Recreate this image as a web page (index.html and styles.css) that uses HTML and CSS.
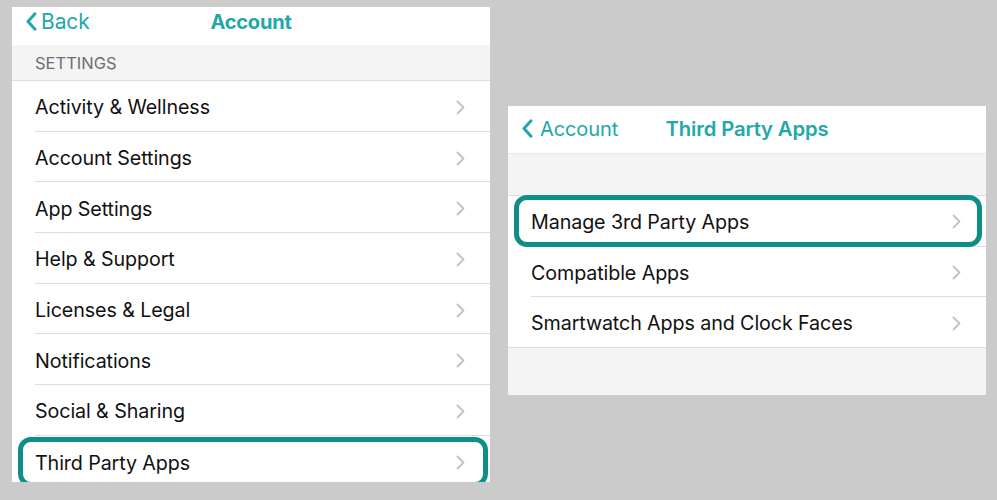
FILE: index.html
```html
<!DOCTYPE html>
<html>
<head>
<meta charset="utf-8">
<link rel="stylesheet" href="styles.css">
</head>
<body>
<div class="stage">
  <section class="panel panel-left">
    <header class="nav">
      <a class="back"><svg class="back-chev" viewBox="0 0 11 19"><path d="M9 1.8 L2 9.5 L9 17.2"/></svg><span>Back</span></a>
      <h1 class="title title-bold">Account</h1>
    </header>
    <div class="section-head">SETTINGS</div>
    <ul class="list">
      <li class="row"><span class="label">Activity &amp; Wellness</span><svg class="chev" viewBox="0 0 9 15"><path d="M1.5 1.5 L7.5 7.5 L1.5 13.5"/></svg></li>
      <li class="row"><span class="label">Account Settings</span><svg class="chev" viewBox="0 0 9 15"><path d="M1.5 1.5 L7.5 7.5 L1.5 13.5"/></svg></li>
      <li class="row"><span class="label">App Settings</span><svg class="chev" viewBox="0 0 9 15"><path d="M1.5 1.5 L7.5 7.5 L1.5 13.5"/></svg></li>
      <li class="row"><span class="label">Help &amp; Support</span><svg class="chev" viewBox="0 0 9 15"><path d="M1.5 1.5 L7.5 7.5 L1.5 13.5"/></svg></li>
      <li class="row"><span class="label">Licenses &amp; Legal</span><svg class="chev" viewBox="0 0 9 15"><path d="M1.5 1.5 L7.5 7.5 L1.5 13.5"/></svg></li>
      <li class="row"><span class="label">Notifications</span><svg class="chev" viewBox="0 0 9 15"><path d="M1.5 1.5 L7.5 7.5 L1.5 13.5"/></svg></li>
      <li class="row"><span class="label">Social &amp; Sharing</span><svg class="chev" viewBox="0 0 9 15"><path d="M1.5 1.5 L7.5 7.5 L1.5 13.5"/></svg></li>
      <li class="row row-last hl-left"><span class="label">Third Party Apps</span><svg class="chev" viewBox="0 0 9 15"><path d="M1.5 1.5 L7.5 7.5 L1.5 13.5"/></svg></li>
    </ul>
  </section>

  <section class="panel panel-right">
    <header class="nav nav-right">
      <a class="back"><svg class="back-chev" viewBox="0 0 11 19"><path d="M9 1.8 L2 9.5 L9 17.2"/></svg><span>Account</span></a>
      <h1 class="title title-semi">Third Party Apps</h1>
    </header>
    <div class="spacer"></div>
    <ul class="list list-right">
      <li class="row hl-right"><span class="label">Manage 3rd Party Apps</span><svg class="chev" viewBox="0 0 9 15"><path d="M1.5 1.5 L7.5 7.5 L1.5 13.5"/></svg></li>
      <li class="row"><span class="label">Compatible Apps</span><svg class="chev" viewBox="0 0 9 15"><path d="M1.5 1.5 L7.5 7.5 L1.5 13.5"/></svg></li>
      <li class="row row-full"><span class="label">Smartwatch Apps and Clock Faces</span><svg class="chev" viewBox="0 0 9 15"><path d="M1.5 1.5 L7.5 7.5 L1.5 13.5"/></svg></li>
    </ul>
    <div class="footer-gap"></div>
  </section>
</div>
</body>
</html>
```

FILE: styles.css
```css
* { box-sizing: border-box; }
html, body {
  margin: 0;
  padding: 0;
  background: #cbcbcb;
  width: 997px;
  height: 500px;
  overflow: hidden;
  font-family: Inter, "Liberation Sans", sans-serif;
}
.stage {
  display: flex;
  align-items: flex-start;
  gap: 18px;
  padding: 7px 0 0 12px;
}
.panel {
  width: 478px;
  background: #ffffff;
  overflow: hidden;
}
.panel-left { height: 475px; }
.panel-right { margin-top: 99px; height: 289px; background: #f4f4f4; }

.nav {
  position: relative;
  height: 38px;
  padding-bottom: 9px;
  background: #fff;
  display: flex;
  align-items: center;
  justify-content: center;
}
.nav-right { height: 48px; padding-bottom: 2px; border-bottom: 1px solid #e9e9e9; }
.back {
  position: absolute;
  left: 14px;
  top: 0;
  bottom: 9px;
  display: flex;
  align-items: center;
  gap: 4px;
  color: #22a7aa;
  font-size: 21px;
  letter-spacing: -0.1px;
}
.nav-right .back { left: 14px; bottom: 2px; font-size: 20px; gap: 7px; }
.back-chev {
  width: 11px;
  height: 19px;
  fill: none;
  stroke: #22a7aa;
  stroke-width: 3;
  stroke-linecap: round;
  stroke-linejoin: round;
}
.title {
  margin: 0;
  color: #22a7aa;
  font-size: 20px;
  letter-spacing: -0.2px;
}
.title-bold { font-weight: 700; }
.title-semi { font-weight: 600; font-size: 20.3px; letter-spacing: -0.15px; }

.section-head {
  height: 36px;
  background: #f4f4f4;
  color: #6e6e72;
  font-size: 16.5px;
  padding-left: 23px;
  display: flex;
  align-items: center;
  border-bottom: 1px solid #dedede;
}
.spacer {
  height: 42px;
  border-bottom: 1px solid #dedede;
}
.list {
  list-style: none;
  margin: 0;
  padding: 0;
  background: #fff;
}
.row {
  position: relative;
  height: 50.7px;
  margin-left: 23px;
  padding-right: 25px;
  padding-top: 3px;
  display: flex;
  align-items: center;
  justify-content: space-between;
  border-bottom: 1px solid #dcdcdc;
  font-size: 19.7px;
  color: #111;
  letter-spacing: -0.1px;
}
.list-right .row { padding-top: 2px; }
.row-last { border-bottom: none; }
.row-full { margin-left: 0; padding-left: 23px; }
.chev {
  width: 9px;
  height: 15px;
  fill: none;
  stroke: #c2c2c6;
  stroke-width: 1.8;
  stroke-linecap: round;
  stroke-linejoin: round;
}
.hl-left::after,
.hl-right::after {
  content: "";
  position: absolute;
  border: 5px solid #0f8d89;
  border-radius: 13px;
  pointer-events: none;
}
.hl-left::after { left: -17px; right: 2px; top: 1px; bottom: 0; }
.hl-right::after { left: -17px; right: 4px; top: -1px; bottom: -1px; }
.footer-gap { height: 48px; }
```
